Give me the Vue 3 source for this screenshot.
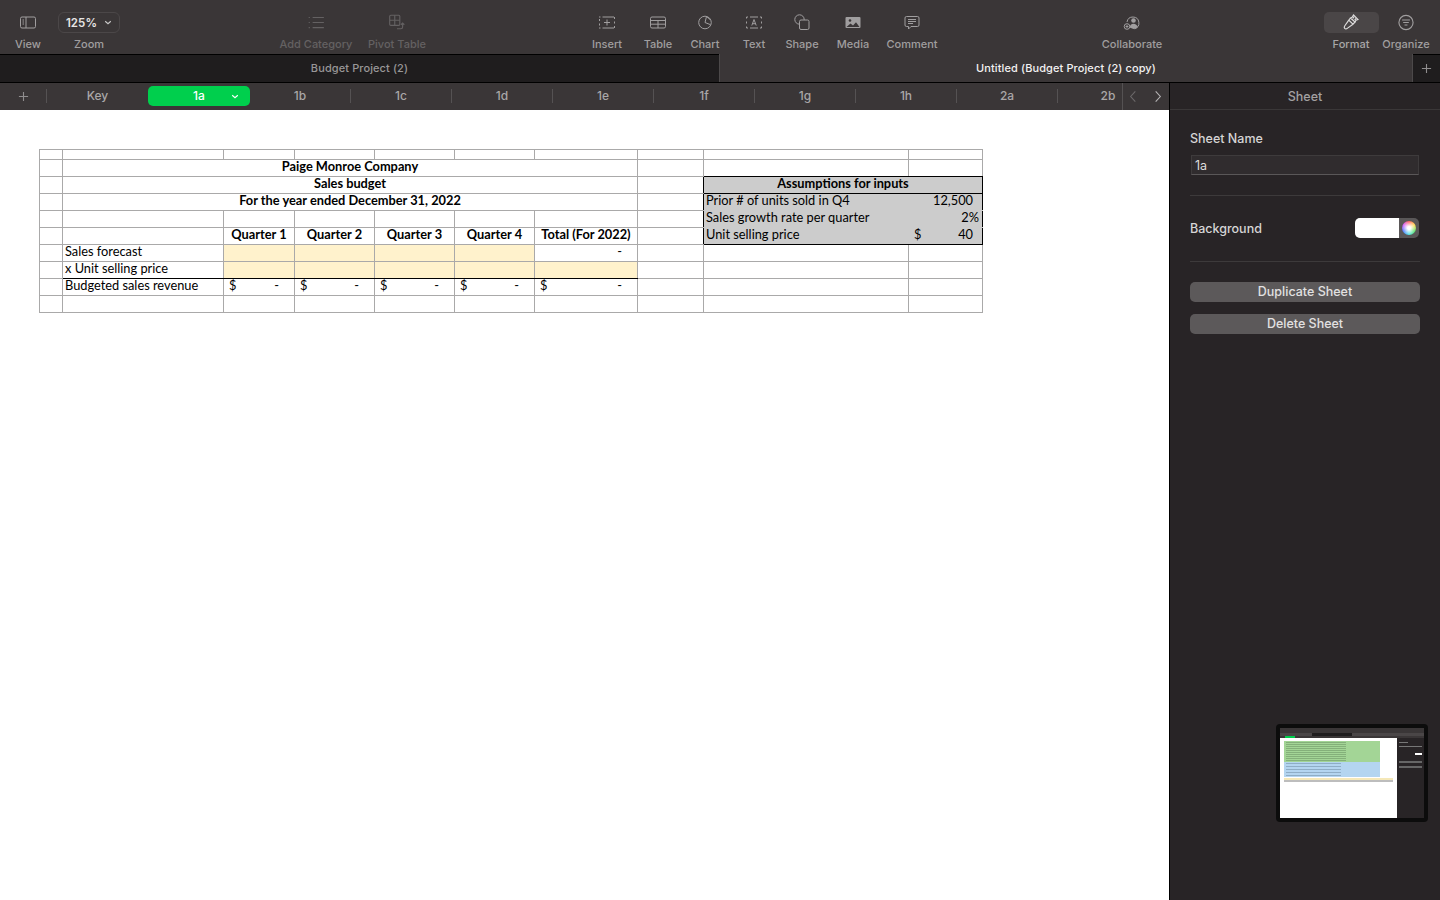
<template>
  <div class="app">
    <header class="toolbar">
      <div class="tool-group">
        <div class="tool tool-view">
          <svg viewBox="0 0 18 14" class="icon"><rect x="1.500" y="1.500" width="15" height="11" rx="1.500" /><path d="M7 1.500v11M3.500 4.500h1.500M3.500 6.500h1.500M3.500 8.500h1.500" /></svg>
          <span>View</span>
        </div>
        <div class="tool tool-zoom">
          <div class="zoom-box">125% <svg viewBox="0 0 10 6" class="chev"><path d="M1.500 1.500 5 4.500l3.500-3" /></svg></div>
          <span>Zoom</span>
        </div>
      </div>

      <div class="tool-group group-data">
        <div class="tool disabled tool-cat">
          <svg viewBox="0 0 16 14" class="icon"><path d="M5 2.500h10M5 7h10M5 11.500h10M1.500 2.500h1M1.500 7h1M1.500 11.500h1" /></svg>
          <span>Add Category</span>
        </div>
        <div class="tool disabled tool-pivot">
          <svg viewBox="0 0 16 15" class="icon"><rect x="1.500" y="1" width="9" height="9" rx="1" /><path d="M1.500 5.500h9M6 1v9M13 8v3.500a1.500 1.500 0 0 1-1.500 1.500H8M11.500 9.500 13 8l1.500 1.500" /></svg>
          <span>Pivot Table</span>
        </div>
      </div>

      <div class="tool-group group-insert">
        <div class="tool" v-for="t in insertTools" :key="t.label" :style="{ width: t.w + 'px' }">
          <svg viewBox="0 0 18 16" class="icon" v-html="t.icon"></svg>
          <span>{{ t.label }}</span>
        </div>
      </div>

      <div class="tool-group group-collab">
        <div class="tool tool-collab">
          <svg viewBox="0 0 18 16" class="icon">
            <path d="M4 7.500a6 6 0 1 1 7.500 6.800" />
            <circle cx="10.500" cy="6" r="2.300" class="fill" />
            <path d="M6.500 13c.3-2.500 2-3.800 4-3.800s3.800 1.300 4.300 3.200c-1.200 1.300-2.800 2-4.300 2z" class="fill" />
            <circle cx="4" cy="12" r="2.800" />
            <path d="M4 10.600v2.800M2.600 12h2.800" />
          </svg>
          <span>Collaborate</span>
        </div>
      </div>

      <div class="tool-group group-right">
        <div class="tool tool-format">
          <div class="format-box">
            <svg viewBox="0 0 16 17" class="icon">
              <path d="M10.500 1 15 5.500l-2 .7-1 1.800-4.500-4 1.800-1z" />
              <path d="M7.500 4 5.800 6.200l4.200 4 2-2.200" />
              <path d="M5.800 6.200 2 11.500c-1 1.400-.9 2.200-.3 2.900.7.700 1.700.7 2.900-.3l5.400-3.900" />
              <path d="M11 2.800 9.800 4.500M13 4.500l-1.300 1.500" />
            </svg>
          </div>
          <span>Format</span>
        </div>
        <div class="tool tool-organize">
          <svg viewBox="0 0 16 16" class="icon"><circle cx="8" cy="8" r="6.300" /><path d="M4.500 5.800h7M5.500 8h5M6.700 10.200h2.600" /></svg>
          <span>Organize</span>
        </div>
      </div>
    </header>

    <nav class="doc-tabs">
      <div class="doc-tab inactive">Budget Project (2)</div>
      <div class="doc-tab active">Untitled (Budget Project (2) copy)</div>
      <div class="doc-add">
        <svg viewBox="0 0 12 12" class="plus"><path d="M6 1v10M1 6h10" /></svg>
      </div>
    </nav>

    <div class="workspace">
      <main class="main">
        <div class="sheet-bar">
          <div class="sheet-add">
            <svg viewBox="0 0 12 12" class="plus"><path d="M6 1v10M1 6h10" /></svg>
          </div>
          <div class="sheet-tabs">
            <div
              v-for="s in sheets"
              :key="s"
              class="sheet-tab"
              :class="{ current: s === '1a' }"
            >
              {{ s }}
              <svg v-if="s === '1a'" viewBox="0 0 10 6" class="tab-chev"><path d="M1.500 1.500 5 4.500l3.500-3" /></svg>
            </div>
          </div>
          <div class="sheet-nav">
            <svg viewBox="0 0 8 14" class="nav-arrow dim"><path d="M6.500 1.500 1.500 7l5 5.500" /></svg>
            <svg viewBox="0 0 8 14" class="nav-arrow"><path d="M1.500 1.500 6.500 7l-5 5.500" /></svg>
          </div>
        </div>

        <div class="canvas">
          <table class="grid">
            <colgroup>
              <col v-for="(w, i) in colWidths" :key="i" :style="{ width: w + 'px' }" />
            </colgroup>
            <tbody>
              <tr class="spacer"><td v-for="n in 10" :key="n"></td></tr>
              <tr>
                <td></td>
                <td colspan="6" class="title">Paige Monroe Company</td>
                <td></td>
                <td class="above-box"></td><td class="above-box"></td>
              </tr>
              <tr>
                <td></td>
                <td colspan="6" class="title">Sales budget</td>
                <td class="before-box"></td>
                <td colspan="2" class="title box box-head">Assumptions for inputs</td>
              </tr>
              <tr>
                <td></td>
                <td colspan="6" class="title">For the year ended December 31, 2022</td>
                <td class="before-box"></td>
                <td class="box box-l">Prior # of units sold in Q4</td>
                <td class="box box-r num num-pad">12,500</td>
              </tr>
              <tr>
                <td></td><td></td><td></td><td></td><td></td><td></td><td></td>
                <td class="before-box"></td>
                <td class="box box-l">Sales growth rate per quarter</td>
                <td class="box box-r num">2%</td>
              </tr>
              <tr>
                <td></td><td></td>
                <td v-for="q in quarters" :key="q" class="title">{{ q }}</td>
                <td class="before-box"></td>
                <td class="box box-l box-b">Unit selling price</td>
                <td class="box box-r box-b">
                  <div class="money money-box"><span>$</span><span>40</span></div>
                </td>
              </tr>
              <tr>
                <td></td>
                <td class="label">Sales forecast</td>
                <td class="input"></td><td class="input"></td><td class="input"></td><td class="input"></td>
                <td class="num num-dash">-</td>
                <td></td><td></td><td></td>
              </tr>
              <tr>
                <td></td>
                <td class="label above-total">x Unit selling price</td>
                <td class="input above-total" v-for="n in 5" :key="n"></td>
                <td></td><td></td><td></td>
              </tr>
              <tr>
                <td></td>
                <td class="label">Budgeted sales revenue</td>
                <td v-for="n in 5" :key="n">
                  <div class="money"><span>$</span><span>-</span></div>
                </td>
                <td></td><td></td><td></td>
              </tr>
              <tr><td v-for="n in 10" :key="n"></td></tr>
            </tbody>
          </table>
        </div>
      </main>

      <aside class="sidebar">
        <div class="side-head">Sheet</div>
        <div class="side-body">
          <div class="side-section name-section">
            <label class="side-label">Sheet Name</label>
            <div class="name-input">1a</div>
          </div>
          <div class="side-section bg-section">
            <span class="side-label bg-label">Background</span>
            <div class="well">
              <div class="well-color"></div>
              <div class="well-wheel"><i></i></div>
            </div>
          </div>
          <div class="side-actions">
            <button class="side-btn">Duplicate Sheet</button>
            <button class="side-btn">Delete Sheet</button>
          </div>
        </div>
      </aside>
    </div>

    <!-- floating screenshot preview -->
    <div class="preview">
      <div class="mini">
        <div class="mini-top"></div>
        <div class="mini-tabs"><b></b></div>
        <div class="mini-sheets"><b></b></div>
        <div class="mini-body">
          <div class="mini-page">
            <div class="mini-green"></div>
            <div class="mini-blue"></div>
            <div class="mini-yellow"></div>
            <div class="mini-gray"></div>
          </div>
          <div class="mini-side">
            <i class="short"></i>
            <i></i>
            <i class="well-mini"></i>
            <i class="btn"></i>
            <i class="btn"></i>
          </div>
        </div>
      </div>
    </div>
  </div>
</template>

<script setup>
const insertTools = [
  {
    label: "Insert",
    w: 50,
    icon: '<path d="M1 2.500h1.500M4.500 2.500h11.500M1 13.500h1.500M4.500 13.500h11.500M1.500 4.500v2M1.500 9v2M16.500 2.500v2M16.500 7v2M16.500 11.500v2" /><path d="M9 5v6M6 8h6" />',
  },
  {
    label: "Table",
    w: 52,
    icon: '<rect x="1.500" y="2.500" width="15" height="11" rx="1.500" /><path d="M1.500 6h15M1.500 9.700h15M9 6v7.500" />',
  },
  {
    label: "Chart",
    w: 42,
    icon: '<circle cx="9" cy="8" r="6.300" /><path d="M9 8 10.500 2M9 8l5.500 2.200M10.500 2l3.500 3" />',
  },
  {
    label: "Text",
    w: 56,
    icon: '<path d="M1.500 4v-1.500h1.500M5 2.500h8M15 2.500h1.500v1.500M1.500 7v2M16.500 7v2M1.500 12v1.500h1.500M5 13.500h8M15 13.500h1.500v-1.500" /><path d="M6.800 11 9 5l2.200 6M7.600 9.200h2.800" />',
  },
  {
    label: "Shape",
    w: 40,
    icon: '<circle cx="6.500" cy="5" r="4.700" /><rect x="6.500" y="5.500" width="9.500" height="9.500" rx="1.500" class="knock" />',
  },
  {
    label: "Media",
    w: 62,
    icon: '<rect x="1.500" y="2.500" width="15" height="11" rx="1" class="fill" /><circle cx="6" cy="6" r="1.300" class="hole" /><path d="M2.500 12.500 6.500 9l2.500 2 3-3.200 3.500 4.700z" class="hole" />',
  },
  {
    label: "Comment",
    w: 56,
    icon: '<path d="M3.500 2h11A1.500 1.500 0 0 1 16 3.500v7a1.500 1.500 0 0 1-1.500 1.500H8l-2.500 2.500V12h-2A1.500 1.500 0 0 1 2 10.500v-7A1.500 1.500 0 0 1 3.500 2z" /><path d="M5 5h8M5 7h8M5 9h5" />',
  },
];

const sheets = ["Key", "1a", "1b", "1c", "1d", "1e", "1f", "1g", "1h", "2a", "2b"];
const quarters = ["Quarter 1", "Quarter 2", "Quarter 3", "Quarter 4", "Total (For 2022)"];
const colWidths = [23, 161, 71, 80, 80, 80, 103, 66, 205, 74];
</script>

<style>
html,
body {
  margin: 0;
  background: #fff;
  overflow: hidden;
}
</style>

<style scoped>
.app {
  position: relative;
  width: 1440px;
  height: 900px;
  overflow: hidden;
  display: flex;
  flex-direction: column;
  font-family: Inter, "Liberation Sans", sans-serif;
  background: #fff;
}

.toolbar {
  height: 54px;
  flex: none;
  display: flex;
  background: #3a3637;
}

.tool-group {
  display: flex;
}

.group-data {
  margin-left: 154px;
}

.group-insert {
  margin-left: 144px;
}

.group-collab {
  margin-left: 152px;
}

.group-right {
  margin-left: 151px;
}

.tool {
  display: flex;
  flex-direction: column;
  align-items: center;
  height: 54px;
  padding-top: 12px;
  box-sizing: border-box;
  font-size: 11px;
  font-weight: 500;
  line-height: 14px;
  color: #a09e9f;
  white-space: nowrap;
}

.tool > span {
  margin-top: 4px;
}

.tool.disabled {
  color: #646162;
}

.tool-view {
  width: 56px;
}

.tool-zoom {
  width: 66px;
}

.tool-cat {
  width: 80px;
}

.tool-pivot {
  width: 82px;
}

.tool-collab {
  width: 80px;
}

.tool-format {
  width: 56px;
  color: #a8a6a7;
}

.tool-organize {
  width: 54px;
}

.icon {
  width: 18px;
  height: 21px;
  fill: none;
  stroke: #a09e9f;
  stroke-width: 1;
}

.tool.disabled .icon {
  stroke: #646162;
}

.icon :deep(.fill),
.icon .fill {
  fill: #a09e9f;
  stroke: none;
}

.icon :deep(.hole) {
  fill: #3a3637;
  stroke: none;
}

.icon :deep(.knock) {
  fill: #3a3637;
}

.zoom-box {
  width: 62px;
  height: 21px;
  box-sizing: border-box;
  border: 1px solid #4b4748;
  border-radius: 6px;
  display: flex;
  align-items: center;
  justify-content: center;
  gap: 7px;
  font-size: 11.5px;
  font-weight: 600;
  letter-spacing: 0.1px;
  color: #e6e5e5;
}

.chev {
  width: 8px;
  height: 5px;
  fill: none;
  stroke: #c9c8c8;
  stroke-width: 1.4;
}

.format-box {
  width: 55px;
  height: 21px;
  border-radius: 5px;
  background: #4a4647;
  display: flex;
  align-items: center;
  justify-content: center;
}

.format-box .icon {
  width: 16px;
  height: 17px;
  stroke: #dcdbdb;
  stroke-width: 1.2;
}

.doc-tabs {
  height: 29px;
  flex: none;
  display: flex;
  box-sizing: border-box;
  border-bottom: 1px solid #000;
  background: #3a3637;
  font-size: 11px;
  font-weight: 500;
}

.doc-tab {
  display: flex;
  align-items: center;
  justify-content: center;
  letter-spacing: 0.1px;
}

.doc-tab.inactive {
  width: 720px;
  box-sizing: border-box;
  background: #1f1d1e;
  box-shadow: inset 0 1px 0 #000;
  border-right: 1px solid #4c494a;
  color: #989697;
}

.doc-tab.active {
  width: 692px;
  color: #f2f1f1;
}

.doc-add {
  flex: 1;
  background: #1f1d1e;
  box-shadow: inset 0 1px 0 #000;
  border-left: 1px solid #4c494a;
  display: flex;
  align-items: center;
  justify-content: center;
}

.plus {
  width: 11px;
  height: 11px;
  fill: none;
  stroke: #8f8d8e;
  stroke-width: 1.2;
}

.workspace {
  flex: 1;
  display: flex;
  min-height: 0;
}

.main {
  width: 1169px;
  display: flex;
  flex-direction: column;
  flex: none;
}

.sheet-bar {
  height: 27px;
  flex: none;
  display: flex;
  background: #3a3637;
}

.sheet-add {
  width: 47px;
  height: 14px;
  margin-top: 6px;
  flex: none;
  display: flex;
  align-items: center;
  justify-content: center;
  border-right: 1px solid #555253;
  box-sizing: border-box;
}

.sheet-tabs {
  width: 1075px;
  height: 26px;
  display: flex;
  align-items: center;
  overflow: hidden;
  flex: none;
}

.sheet-tab {
  position: relative;
  width: 101px;
  height: 14px;
  flex: none;
  display: flex;
  align-items: center;
  justify-content: center;
  box-sizing: border-box;
  padding-bottom: 1px;
  border-right: 1px solid #555253;
  font-size: 12px;
  font-weight: 500;
  color: #a9a7a8;
}

.sheet-tab:first-child,
.sheet-tab.current {
  border-right: none;
}

.sheet-tab.current {
  width: 102px;
  height: 20px;
  border-radius: 5px;
  background: #00cf4d;
  color: #fff;
}

.tab-chev {
  position: absolute;
  right: 11px;
  top: 8px;
  width: 8px;
  height: 5px;
  fill: none;
  stroke: #fff;
  stroke-width: 1.4;
}

.sheet-nav {
  flex: 1;
  display: flex;
  align-items: center;
  justify-content: space-between;
  box-sizing: border-box;
  padding: 0 7px 1px 6px;
  border-left: 1px solid #555253;
}

.nav-arrow {
  width: 8px;
  height: 13px;
  fill: none;
  stroke: #b5b3b4;
  stroke-width: 1.2;
}

.nav-arrow.dim {
  stroke: #6b6869;
}

.canvas {
  flex: 1;
  background: #fff;
  padding: 39px 0 0 39px;
}

.grid {
  table-layout: fixed;
  border-collapse: collapse;
  width: 943px;
  font-family: Lato, "Liberation Sans", sans-serif;
  font-size: 12.8px;
  line-height: 13px;
  color: #000;
}

.grid tr {
  height: 17px;
}

.grid tr.spacer {
  height: 10px;
}

.grid td {
  border: 1px solid #aaa9a9;
  padding: 0 0 3px;
  white-space: nowrap;
  overflow: hidden;
  box-sizing: border-box;
}

.grid tr.spacer td {
  padding: 0;
}

.grid td.title {
  text-align: center;
  font-weight: 700;
}

.grid td.label {
  padding-left: 2px;
}

.grid td.input {
  background: #fff2cc;
}

.grid td.above-total {
  border-bottom-color: #000;
}

.grid td.above-box {
  border-bottom-color: #000;
}

.grid td.before-box {
  border-right-color: #000;
}

.grid td.num {
  text-align: right;
  padding-right: 3px;
}

.grid td.num-pad {
  padding-right: 9px;
}

.grid td.num-dash {
  padding-right: 15px;
}

.grid td.box {
  background: #cccccc;
  border-color: #cccccc;
}

.grid td.box-head {
  border-color: #000;
}

.grid td.box-l {
  border-left-color: #000;
  padding-left: 2px;
}

.grid td.box-r {
  border-right-color: #000;
}

.grid td.box-b {
  border-bottom-color: #000;
}

.money {
  display: flex;
  justify-content: space-between;
  padding: 0 15px 0 5px;
}

.money-box {
  padding: 0 9px 0 5px;
}

.sidebar {
  flex: 1;
  background: #282426;
  border-left: 1px solid #000;
  display: flex;
  flex-direction: column;
}

.side-head {
  height: 27px;
  box-sizing: border-box;
  display: flex;
  align-items: center;
  justify-content: center;
  border-bottom: 1px solid #3a3738;
  font-size: 12.5px;
  font-weight: 500;
  color: #a3a1a2;
}

.side-body {
  padding: 0 20px;
}

.side-section {
  border-bottom: 1px solid #3d3a3b;
}

.side-label {
  font-size: 12.5px;
  font-weight: 500;
  color: #d6d5d5;
}

.bg-label {
  margin-top: 1px;
}

.name-section {
  height: 86px;
  box-sizing: border-box;
  padding-top: 21px;
}

.name-section .side-label {
  display: block;
  line-height: 16px;
}

.name-input {
  margin: 8px 1px 0;
  height: 20px;
  box-sizing: border-box;
  background: #302c2e;
  border: 1px solid #3e3b3c;
  border-bottom-color: #5a5758;
  padding-left: 3px;
  font-size: 12.5px;
  line-height: 19px;
  color: #dddcdc;
}

.bg-section {
  height: 66px;
  box-sizing: border-box;
  padding-bottom: 2px;
  display: flex;
  align-items: center;
  justify-content: space-between;
}

.well {
  display: flex;
  width: 64px;
  height: 20px;
  margin-right: 1px;
  border-radius: 5px;
  overflow: hidden;
  background: #5a5758;
}

.well-color {
  width: 44px;
  background: #fff;
}

.well-wheel {
  flex: 1;
  display: flex;
  align-items: center;
  justify-content: center;
}

.well-wheel i {
  width: 14px;
  height: 14px;
  border-radius: 50%;
  background: radial-gradient(circle, #fff 0 15%, transparent 70%),
    conic-gradient(#ff5b5b, #ffd84a, #5be36a, #4fe3e3, #4f7dff, #d25bff, #ff5b5b);
}

.side-actions {
  display: flex;
  flex-direction: column;
  gap: 12px;
  padding-top: 20px;
}

.side-btn {
  height: 20px;
  padding: 0 0 1px;
  border: none;
  border-radius: 5px;
  background: #5c595a;
  font-family: inherit;
  font-size: 12.5px;
  font-weight: 500;
  color: #e2e1e1;
}

.preview {
  position: absolute;
  left: 1276px;
  top: 724px;
  width: 152px;
  height: 98px;
  box-sizing: border-box;
  padding: 4px;
  background: #0c0c0c;
  border-radius: 4px;
}

.mini {
  height: 100%;
  display: flex;
  flex-direction: column;
  background: #3a3637;
}

.mini-top {
  height: 5px;
  flex: none;
  background: #3a3637;
}

.mini-tabs {
  height: 3px;
  flex: none;
  background: #4a4647;
}

.mini-tabs b {
  display: block;
  width: 40px;
  height: 3px;
  margin-left: 32px;
  background: #1f1d1e;
}

.mini-sheets {
  height: 2px;
  flex: none;
  background: #3a3637;
}

.mini-sheets b {
  display: block;
  width: 10px;
  height: 2px;
  margin-left: 5px;
  background: #00cf4d;
}

.mini-body {
  flex: 1;
  display: flex;
}

.mini-page {
  width: 117px;
  background: #fff;
  padding: 3px 0 0 4px;
  box-sizing: border-box;
}

.mini-green,
.mini-blue {
  width: 96px;
}

.mini-green {
  height: 21px;
  background: repeating-linear-gradient(to bottom, #84b07a 0 1px, #a3d596 1px 2px) 2px 1px / 60px 100% no-repeat,
    #a3d596;
}

.mini-blue {
  height: 15px;
  background: repeating-linear-gradient(to bottom, #8fadc6 0 1px, #b4d5f0 1px 3px) 2px 1px / 55px 100% no-repeat,
    #b4d5f0;
}

.mini-yellow {
  width: 109px;
  height: 2px;
  margin-top: 1px;
  background: #f5e8b8;
}

.mini-gray {
  width: 109px;
  height: 2px;
  background: #bdbdbd;
}

.mini-side {
  flex: 1;
  background: #282426;
  padding: 4px 2px 0;
  display: flex;
  flex-direction: column;
  gap: 3px;
}

.mini-side i {
  display: block;
  height: 1px;
  background: #777;
}

.mini-side i.short {
  width: 9px;
}

.mini-side i.well-mini {
  width: 7px;
  height: 2px;
  margin: 3px 0 3px auto;
  background: #fff;
}

.mini-side i.btn {
  height: 2px;
  background: #666;
}
</style>
